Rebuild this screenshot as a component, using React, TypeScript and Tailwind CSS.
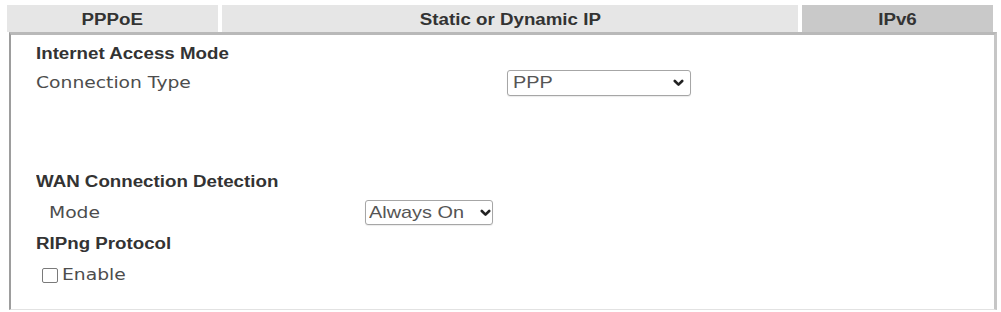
import React from "react";

const S = ({ children, center }: { children: React.ReactNode; center?: boolean }) => (
  <span className={`inline-block whitespace-nowrap scale-x-[1.17] ${center ? "origin-center" : "origin-left"}`}>
    {children}
  </span>
);

const Chevron = () => (
  <svg width="11" height="8" viewBox="0 0 11 8" className="shrink-0">
    <path d="M1.8 2 L5.5 5.6 L9.2 2" fill="none" stroke="#222" strokeWidth="2.6" strokeLinecap="round" strokeLinejoin="round" />
  </svg>
);

export default function App() {
  const heading = "text-[16px] leading-[20px] font-bold text-[#333] [font-family:'Liberation_Sans',Arial,sans-serif]";
  const label = "text-[16px] leading-[20px] text-[#4d4d4d] [font-family:'DejaVu_Sans',Verdana,sans-serif]";
  const selText = "text-[17px] leading-[20px] text-[#555] [font-family:'Liberation_Sans',Arial,sans-serif]";
  return (
    <div className="w-[1001px] h-[312px] bg-white pt-[5px] pl-[7px] overflow-hidden">
      {/* tabs */}
      <div className="flex h-[27px] w-[986px] gap-[4px] text-[16px] font-bold text-[#333] [font-family:'Liberation_Sans',Arial,sans-serif]">
        <div className="w-[211px] bg-[#e6e6e6] pt-[2px] leading-[25px] text-center">
          <S center>PPPoE</S>
        </div>
        <div className="w-[576px] bg-[#e6e6e6] pt-[2px] leading-[25px] text-center">
          <S center>Static or Dynamic IP</S>
        </div>
        <div className="w-[191px] bg-[#c9c9c9] pt-[2px] leading-[25px] text-center">
          <S center>IPv6</S>
        </div>
      </div>
      {/* frame */}
      <div className="ml-[2px] w-[988px] h-[278px] border-t-[3px] border-t-[#b9b9b9] border-l-2 border-l-[#9d9d9d] border-r-[3px] border-r-[#c6c6c6] border-b border-b-[#e2e2e2] pt-[9px] pl-[25px]">
        <div className={heading}>
          <S>Internet Access Mode</S>
        </div>
        <div className="mt-[6px] h-[26px] flex items-center">
          <div className={`${label} w-[471px]`}>
            <S>Connection Type</S>
          </div>
          <div className="w-[184px] h-[26px] border border-[#a6a6a6] rounded-[3px] bg-white shadow-[0_1px_1px_rgba(0,0,0,0.08)] flex items-center justify-between pl-[5px] pr-[6px]">
            <span className={selText}>
              <S>PPP</S>
            </span>
            <Chevron />
          </div>
        </div>

        <div className={`${heading} mt-[76px]`}>
          <S>WAN Connection Detection</S>
        </div>
        <div className="mt-[8px] h-[25px] flex items-center">
          <div className={`${label} w-[329px] pl-[13px]`}>
            <S>Mode</S>
          </div>
          <div className="w-[128px] h-[25px] border border-[#a6a6a6] rounded-[3px] bg-white shadow-[0_1px_1px_rgba(0,0,0,0.08)] flex items-center justify-between pl-[3px] pr-[1px]">
            <span className={selText}>
              <S>Always On</S>
            </span>
            <Chevron />
          </div>
        </div>

        <div className={`${heading} mt-[9px]`}>
          <S>RIPng Protocol</S>
        </div>
        <div className="mt-[11px] h-[20px] flex items-center pl-[6px]">
          <span className="w-[16px] h-[15px] border border-[#7a7a7a] rounded-[2px] bg-white shrink-0" />
          <span className={`${label} ml-[4px]`}>
            <S>Enable</S>
          </span>
        </div>
      </div>
    </div>
  );
}
